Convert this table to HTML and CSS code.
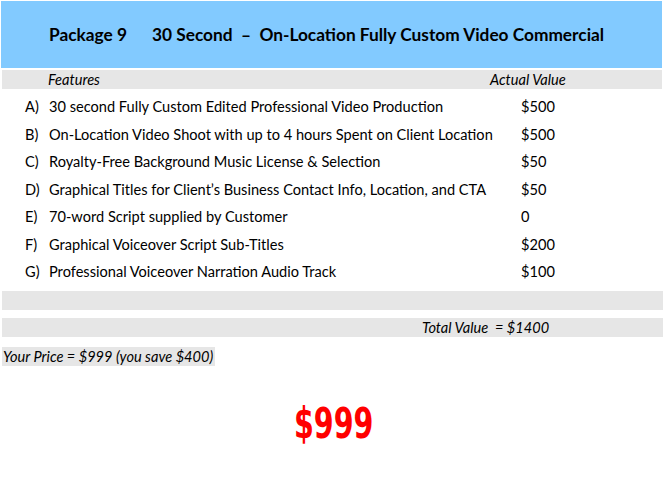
FILE: index.html
```html
<!DOCTYPE html>
<html>
<head>
<meta charset="utf-8">
<link rel="stylesheet" href="styles.css">
</head>
<body>
<div class="page">
  <div class="header">
    <span class="pkg">Package 9</span>
    <span class="title">30 Second &nbsp;–&nbsp; On-Location Fully Custom Video Commercial</span>
  </div>
  <div class="colhead">
    <span class="c-feat">Features</span>
    <span class="c-val">Actual Value</span>
  </div>
  <div class="rows">
    <div class="row"><span class="lbl">A)</span><span class="txt">30 second Fully Custom Edited Professional Video Production</span><span class="val">$500</span></div>
    <div class="row"><span class="lbl">B)</span><span class="txt">On-Location Video Shoot with up to 4 hours Spent on Client Location</span><span class="val">$500</span></div>
    <div class="row"><span class="lbl">C)</span><span class="txt">Royalty-Free Background Music License &amp; Selection</span><span class="val">$50</span></div>
    <div class="row"><span class="lbl">D)</span><span class="txt">Graphical Titles for Client’s Business Contact Info, Location, and CTA</span><span class="val">$50</span></div>
    <div class="row"><span class="lbl">E)</span><span class="txt">70-word Script supplied by Customer</span><span class="val">0</span></div>
    <div class="row"><span class="lbl">F)</span><span class="txt">Graphical Voiceover Script Sub-Titles</span><span class="val">$200</span></div>
    <div class="row"><span class="lbl">G)</span><span class="txt">Professional Voiceover Narration Audio Track</span><span class="val">$100</span></div>
  </div>
  <div class="bar blank"></div>
  <div class="bar total"><span>Total Value &nbsp;= $1400</span></div>
  <div class="price-line"><span class="price-tag">Your Price = $999 (you save $400)</span></div>
  <div class="big">$999</div>
</div>
</body>
</html>
```
FILE: styles.css
```css
html, body {
  margin: 0;
  padding: 0;
  background: #ffffff;
}
body {
  font-family: Lato, "Open Sans", sans-serif;
  color: #000;
}
.page {
  width: 665px;
  padding-top: 1px;
}
.header {
  margin: 0 3px 0 1px;
  height: 67px;
  background: #82caff;
  display: flex;
  align-items: center;
  font-weight: bold;
  font-size: 17.3px;
  box-sizing: border-box;
}
.pkg {
  margin-left: 48px;
  width: 103px;
}
.colhead {
  margin: 2px 3px 0 2px;
  height: 19px;
  background: #e6e6e6;
  display: flex;
  align-items: center;
  font-style: italic;
  font-size: 14.6px;
}
.c-feat {
  margin-left: 46px;
  width: 442px;
}
.rows {
  padding-top: 4px;
}
.row {
  height: 27.5px;
  display: flex;
  align-items: center;
  font-size: 14.6px;
}
.lbl {
  width: 24px;
  margin-left: 25px;
}
.txt {
  width: 472px;
}
.bar {
  margin: 0 2px 0 2px;
  height: 19px;
  background: #e6e6e6;
}
.blank {
  margin-top: 5px;
}
.total {
  margin-top: 8px;
  display: flex;
  align-items: center;
  font-style: italic;
  font-size: 14.6px;
}
.total span {
  margin-left: 420px;
}
.price-line {
  margin-top: 9px;
  height: 19px;
}
.price-tag {
  display: inline-block;
  height: 19px;
  line-height: 19px;
  background: #e6e6e6;
  font-style: italic;
  font-size: 14.6px;
  padding: 0 2px 0 1px;
  margin-left: 2px;
}
.big {
  margin-top: 38px;
  margin-left: 294px;
  color: #ff0000;
  font-family: "DejaVu Sans", sans-serif;
  font-weight: bold;
  font-size: 42px;
  line-height: 42px;
  display: inline-block;
  transform: scaleX(0.68);
  transform-origin: left center;
}
```
